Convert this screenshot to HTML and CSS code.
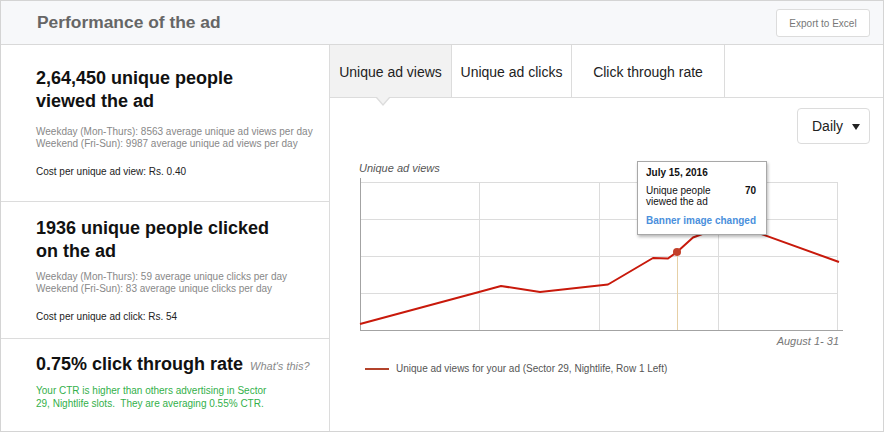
FILE: index.html
```html
<!DOCTYPE html>
<html>
<head>
<meta charset="utf-8">
<link rel="stylesheet" href="styles.css">
</head>
<body>
<div class="frame">
  <header class="header">
    <h1 class="title">Performance of the ad</h1>
    <button class="export-btn">Export to Excel</button>
  </header>
  <div class="main">
    <aside class="left">
      <section class="stat stat-views">
        <h2 class="stat-title">2,64,450 unique people<br>viewed the ad</h2>
        <p class="stat-detail">Weekday (Mon-Thurs): 8563 average unique ad views per day<br>Weekend (Fri-Sun): 9987 average unique ad views per day</p>
        <p class="stat-cost">Cost per unique ad view: Rs. 0.40</p>
      </section>
      <section class="stat stat-clicks">
        <h2 class="stat-title">1936 unique people clicked<br>on the ad</h2>
        <p class="stat-detail">Weekday (Mon-Thurs): 59 average unique clicks per day<br>Weekend (Fri-Sun): 83 average unique clicks per day</p>
        <p class="stat-cost">Cost per unique ad click: Rs. 54</p>
      </section>
      <section class="stat stat-ctr">
        <h2 class="stat-title">0.75% click through rate <span class="whats">What's this?</span></h2>
        <p class="ctr-note">Your CTR is higher than others advertising in Sector<br>29, Nightlife slots.&nbsp; They are averaging 0.55% CTR.</p>
      </section>
    </aside>
    <div class="right">
      <nav class="tabs">
        <div class="tab tab-active tab-1">Unique ad views</div>
        <div class="tab tab-2">Unique ad clicks</div>
        <div class="tab tab-3">Click through rate</div>
      </nav>
      <div class="toolbar">
        <div class="dropdown">Daily <span class="caret-down"></span></div>
      </div>
      <div class="chart">
        <div class="chart-label">Unique ad views</div>
        <svg class="chart-svg" width="490" height="156" viewBox="355 176 490 156">
          <g stroke="#dcdcdc" stroke-width="1">
            <line x1="360" y1="182.5" x2="838" y2="182.5"/>
            <line x1="360" y1="219.5" x2="838" y2="219.5"/>
            <line x1="360" y1="256.5" x2="838" y2="256.5"/>
            <line x1="360" y1="293.5" x2="838" y2="293.5"/>
            <line x1="479.5" y1="182" x2="479.5" y2="330"/>
            <line x1="599.5" y1="182" x2="599.5" y2="330"/>
            <line x1="718.5" y1="182" x2="718.5" y2="330"/>
            <line x1="837.5" y1="182" x2="837.5" y2="330"/>
          </g>
          <line x1="677.5" y1="252" x2="677.5" y2="330" stroke="#e6d0a6" stroke-width="1"/>
          <g stroke="#a3a3a3" stroke-width="1">
            <line x1="360.5" y1="178" x2="360.5" y2="331"/>
            <line x1="360" y1="330.5" x2="843" y2="330.5"/>
          </g>
          <polyline fill="none" stroke="#c8190b" stroke-width="2" stroke-linejoin="round"
            points="360,324 479,292 501,286 540,292 608,284.5 653,258 668,258.5 677,252 693,237.5 705,233 720,228 745,228 760,233.5 839,262"/>
          <circle cx="677" cy="252" r="4" fill="#c2402a"/>
        </svg>
        <div class="axis-caption">August 1- 31</div>
        <div class="legend"><span class="legend-line"></span>Unique ad views for your ad (Sector 29, Nightlife, Row 1 Left)</div>
        <div class="tooltip">
          <div class="tt-date">July 15, 2016</div>
          <div class="tt-row"><span>Unique people<br>viewed the ad</span><b class="tt-val">70</b></div>
          <div class="tt-link">Banner image changed</div>
        </div>
      </div>
    </div>
  </div>
</div>
</body>
</html>
```
FILE: styles.css
```css
* { box-sizing: border-box; }
html, body { margin: 0; padding: 0; background: #fff; }
body { font-family: "Liberation Sans", Arial, Helvetica, sans-serif; color: #222; }

.frame {
  width: 884px;
  height: 432px;
  border: 1px solid #d4d4d4;
  display: flex;
  flex-direction: column;
  overflow: hidden;
}

.header {
  height: 44px;
  flex: none;
  background: #f7f8fa;
  border-bottom: 1px solid #d9d9d9;
  display: flex;
  align-items: center;
  justify-content: space-between;
  padding: 0 13px 0 36px;
}
.title {
  margin: 0;
  font-size: 17.4px;
  font-weight: bold;
  color: #666;
}
.export-btn {
  width: 94px;
  height: 28px;
  margin-top: 1px;
  background: #fff;
  border: 1px solid #dcdcdc;
  border-radius: 3px;
  font-family: inherit;
  font-size: 10px;
  color: #777;
  padding: 0;
}

.main { flex: 1; display: flex; min-height: 0; }

.left {
  width: 329px;
  flex: none;
  border-right: 1px solid #dcdcdc;
  display: flex;
  flex-direction: column;
}
.stat {
  border-bottom: 1px solid #dcdcdc;
  padding-left: 35px;
}
.stat-views { height: 157px; padding-top: 22px; }
.stat-clicks { height: 137px; padding-top: 15px; }
.stat-ctr { flex: 1; border-bottom: none; padding-top: 14px; }

.stat-title {
  margin: 0;
  font-size: 18px;
  line-height: 23px;
  font-weight: bold;
  color: #111;
}
.stat-detail {
  margin: 13px 0 0;
  font-size: 10px;
  line-height: 12px;
  color: #888;
}
.stat-clicks .stat-detail { margin-top: 8px; }
.stat-cost {
  margin: 16px 0 0;
  font-size: 10px;
  line-height: 12px;
  color: #222;
}
.whats {
  font-size: 11px;
  font-weight: normal;
  font-style: italic;
  color: #888;
  margin-left: 2px;
}
.ctr-note {
  margin: 6px 0 0;
  font-size: 10px;
  line-height: 13px;
  color: #33b04a;
}

.right { flex: 1; display: flex; flex-direction: column; min-width: 0; }

.tabs {
  height: 53px;
  flex: none;
  display: flex;
  border-bottom: 1px solid #dcdcdc;
}
.tab {
  position: relative;
  border-right: 1px solid #dcdcdc;
  font-size: 14px;
  color: #222;
  display: flex;
  align-items: center;
  justify-content: center;
  padding-top: 1px;
}
.tab-1 { width: 122px; }
.tab-2 { width: 120px; }
.tab-3 { width: 153px; }
.tab-active { background: #f2f2f2; }
.tab-active::before,
.tab-active::after {
  content: "";
  position: absolute;
  width: 0;
  height: 0;
  border-style: solid;
}
.tab-active::before {
  left: 46px;
  bottom: -9px;
  border-width: 8px 7px 0 7px;
  border-color: #dcdcdc transparent transparent transparent;
}
.tab-active::after {
  left: 47px;
  bottom: -7px;
  border-width: 7px 6px 0 6px;
  border-color: #f2f2f2 transparent transparent transparent;
}

.toolbar {
  display: flex;
  justify-content: flex-end;
  padding: 10px 13px 0 0;
}
.dropdown {
  width: 73px;
  height: 36px;
  border: 1px solid #dcdcdc;
  border-radius: 4px;
  display: flex;
  align-items: center;
  padding-left: 14px;
  font-size: 14px;
  color: #222;
}
.caret-down {
  width: 0;
  height: 0;
  margin-left: 9px;
  margin-top: 1px;
  border-style: solid;
  border-width: 6px 4.5px 0 4.5px;
  border-color: #222 transparent transparent transparent;
}

.chart {
  position: relative;
  margin: 18px 0 0 25px;
  width: 490px;
}
.chart-label {
  padding-left: 4px;
  font-size: 11px;
  line-height: 13px;
  font-style: italic;
  color: #555;
  height: 14px;
}
.chart-svg { display: block; }
.axis-caption {
  margin-top: 3px;
  padding-right: 6px;
  text-align: right;
  font-size: 11px;
  line-height: 13px;
  font-style: italic;
  color: #777;
}
.legend {
  margin-top: 14px;
  padding-left: 10px;
  display: flex;
  align-items: center;
  font-size: 10px;
  line-height: 13px;
  color: #555;
}
.legend-line {
  width: 24px;
  height: 2px;
  background: #b3432b;
  margin-right: 7px;
}

.tooltip {
  position: absolute;
  left: 282px;
  top: -1px;
  width: 130px;
  height: 74px;
  background: #fff;
  border: 1px solid #a8a8a8;
  box-shadow: 1px 2px 3px rgba(0, 0, 0, 0.28);
  padding: 5px 10px 0 8px;
  font-size: 10px;
  color: #111;
  white-space: nowrap;
}
.tt-date { font-weight: bold; line-height: 12px; }
.tt-row {
  margin-top: 6px;
  display: flex;
  justify-content: space-between;
  line-height: 11px;
}
.tt-val { font-weight: bold; }
.tt-link {
  margin-top: 8px;
  line-height: 12px;
  font-weight: bold;
  color: #4a8fdc;
}
```
